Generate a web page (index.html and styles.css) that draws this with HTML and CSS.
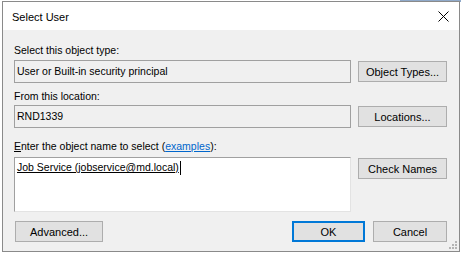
FILE: index.html
```html
<!DOCTYPE html>
<html>
<head>
<meta charset="utf-8">
<link rel="stylesheet" href="styles.css">
</head>
<body>
<div class="desk-strip"></div>
<div class="window">
  <div class="titlebar">
    <span class="title">Select User</span>
    <span class="close">
      <svg width="11" height="11" viewBox="0 0 11 11"><path d="M0.5 0.5 L10.5 10.5 M10.5 0.5 L0.5 10.5" stroke="#000" stroke-width="1" fill="none"/></svg>
    </span>
  </div>
  <div class="content">
    <div class="label l1">Select this object type:</div>
    <div class="row r1">
      <div class="textbox readonly">User or Built-in security principal</div>
      <div class="button">Object Types...</div>
    </div>
    <div class="label l2">From this location:</div>
    <div class="row r2">
      <div class="textbox readonly">RND1339</div>
      <div class="button">Locations...</div>
    </div>
    <div class="label l3"><u>E</u>nter the object name to select (<span class="link">examples</span>):</div>
    <div class="row r3">
      <div class="textarea"><span class="entry">Job Service (jobservice@md.local)</span><span class="caret"></span></div>
      <div class="button">Check Names</div>
    </div>
    <div class="footer">
      <div class="button adv">Advanced...</div>
      <div class="spacer"></div>
      <div class="button ok">OK</div>
      <div class="button cancel">Cancel</div>
    </div>
  </div>
  <div class="grip">
    <svg width="8" height="8" viewBox="0 0 8 8" fill="#b4b4b4">
      <rect x="6" y="0" width="2" height="2"/>
      <rect x="3" y="3" width="2" height="2"/><rect x="6" y="3" width="2" height="2"/>
      <rect x="0" y="6" width="2" height="2"/><rect x="3" y="6" width="2" height="2"/><rect x="6" y="6" width="2" height="2"/>
    </svg>
  </div>
</div>
</body>
</html>
```
FILE: styles.css
```css
html, body {
  margin: 0;
  padding: 0;
  background: #ffffff;
}
body {
  width: 461px;
  height: 253px;
  overflow: hidden;
  position: relative;
  font-family: "Liberation Sans", Arial, sans-serif;
  font-size: 10.5px;
  color: #000;
}
.desk-strip {
  position: absolute;
  left: 400px;
  top: 0;
  width: 61px;
  height: 2px;
  background: #8fa9c9;
}
.window {
  position: relative;
  box-sizing: border-box;
  margin: 1px 0 0 2px;
  width: 458px;
  height: 251px;
  border: 1px solid #8a8a8a;
  background: #f0f0f0;
}
.titlebar {
  height: 28px;
  background: #ffffff;
  display: flex;
  align-items: center;
  justify-content: space-between;
  padding: 0 10px 0 9px;
}
.title {
  font-size: 11px;
  margin-top: 1px;
}
.close {
  display: flex;
}
.content {
  padding: 14px 12px 0 11px;
  display: flex;
  flex-direction: column;
}
.label {
  height: 13px;
  line-height: 13px;
  white-space: nowrap;
}
.link {
  color: #0066cc;
  text-decoration: underline;
}
.row {
  display: flex;
  gap: 7px;
  align-items: center;
}
.r1 { margin-top: 3px; }
.l2 { margin-top: 7px; }
.r2 { margin-top: 2px; }
.l3 { margin-top: 12px; }
.r3 { margin-top: 4px; align-items: flex-start; }
.textbox {
  box-sizing: border-box;
  width: 337px;
  height: 23px;
  line-height: 21px;
  padding-left: 2px;
  border: 1px solid #a0a0a0;
  white-space: nowrap;
}
.readonly {
  background: #f0f0f0;
}
.textarea {
  box-sizing: border-box;
  width: 337px;
  height: 55px;
  background: #fff;
  border: 1px solid #a0a0a0;
  border-right-color: #e3e3e3;
  border-bottom-color: #e3e3e3;
  padding: 3px 0 0 2px;
  line-height: 13px;
  display: flex;
  align-items: flex-start;
  white-space: nowrap;
}
.entry {
  text-decoration: underline;
}
.caret {
  width: 1px;
  height: 14px;
  background: #000;
  margin-left: 1px;
}
.button {
  box-sizing: border-box;
  width: 89px;
  height: 21px;
  background: #e1e1e1;
  border: 1px solid #adadad;
  display: flex;
  align-items: center;
  justify-content: center;
  white-space: nowrap;
  font-size: 11px;
}
.r3 .button { margin-top: 1px; }
.footer {
  display: flex;
  margin-top: 9px;
  gap: 8px;
}
.adv { width: 88px; margin-left: 1px; }
.spacer { flex: 1; }
.ok {
  width: 73px;
  border: 2px solid #0078d7;
}
.cancel { width: 74px; }
.grip {
  position: absolute;
  right: 2px;
  bottom: 2px;
  display: flex;
}
```
